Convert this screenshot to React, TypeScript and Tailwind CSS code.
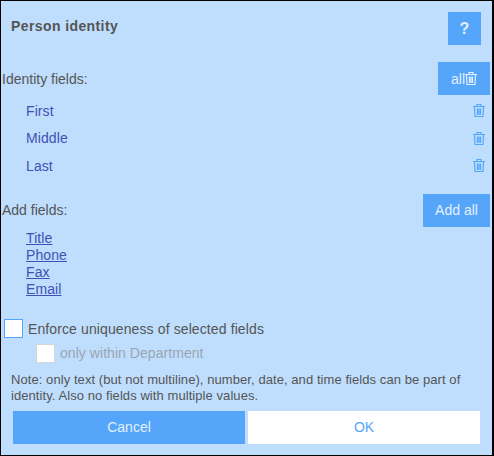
function Trash({ className }: { className?: string }) {
  return (
    <svg viewBox="0 0 12 13" className={className} fill="none" stroke="currentColor" strokeWidth="1.2">
      <path d="M0 2.5h12M4 2.5V.5h4v2M1.5 2.5l.5 10h8l.5-10M4.5 4.5v6.5M6 4.5v6.5M7.5 4.5v6.5" />
    </svg>
  );
}

const identityFields = ['First', 'Middle', 'Last'];
const addFields = ['Title', 'Phone', 'Fax', 'Email'];

export default function App() {
  return (
    <div className="h-[456px] w-[494px] border border-r-2 border-black bg-[#bfdefd] font-['Liberation_Sans',Arial,sans-serif] text-sm text-[#555555]">
      <div className="flex h-[61px] justify-between pl-[10px] pr-[11px] pt-[11px]">
        <h1 className="pt-[6px] text-sm font-bold leading-4 tracking-[0.4px]">Person identity</h1>
        <button type="button" className="h-[33px] w-[33px] bg-[#55a6fb] text-base font-bold text-[#e3f0fe]">?</button>
      </div>

      <div className="flex h-[33px] items-center justify-between pl-px pr-[2px]">
        <span>Identity fields:</span>
        <button type="button" className="flex h-[33px] w-[52px] items-center justify-center bg-[#55a6fb] text-[#e3f0fe]">
          all
          <Trash className="h-[13px] w-[12px]" />
        </button>
      </div>

      <ul className="mb-[14px] pl-[25px] pr-[7px] pt-[2px] text-[#3f51b5]">
        {identityFields.map((field) => (
          <li key={field} className="flex h-[27.5px] items-center justify-between tracking-[0.1px]">
            {field}
            <Trash className="h-[13px] w-[12px] text-[#55a6fb]" />
          </li>
        ))}
      </ul>

      <div className="flex h-[33px] items-center justify-between pl-px pr-[2px]">
        <span>Add fields:</span>
        <button type="button" className="h-[33px] w-[67px] bg-[#55a6fb] text-[#e3f0fe]">Add all</button>
      </div>

      <ul className="pl-[25px] pt-[3px] leading-[17px] tracking-[0.1px] text-[#3f51b5]">
        {addFields.map((field) => (
          <li key={field}>
            <a href="#" className="underline">{field}</a>
          </li>
        ))}
      </ul>

      <label className="mt-[21px] flex h-[20px] items-center pl-[3px]">
        <span className="h-[19px] w-[19px] border border-[#55a6fb] bg-white" />
        <span className="ml-[5px] tracking-[0.11px]">Enforce uniqueness of selected fields</span>
      </label>

      <label className="mt-[5px] flex h-[19px] items-center pl-[35px] text-[#9aa5b1]">
        <span className="h-[19px] w-[19px] border border-[#d5d5d5] bg-white" />
        <span className="ml-[5px] tracking-[0.05px]">only within Department</span>
      </label>

      <p className="mt-[9px] px-[10px] text-[13px] leading-4 tracking-[0.07px]">
        Note: only text (but not multiline), number, date, and time fields can be part of identity. Also no fields with multiple values.
      </p>

      <div className="mt-[7px] flex gap-[3px] pl-[12px]">
        <button type="button" className="h-[33px] w-[232px] bg-[#55a6fb] text-[#e3f0fe]">Cancel</button>
        <button type="button" className="h-[33px] w-[232px] bg-white text-[#55a6fb]">OK</button>
      </div>
    </div>
  );
}
